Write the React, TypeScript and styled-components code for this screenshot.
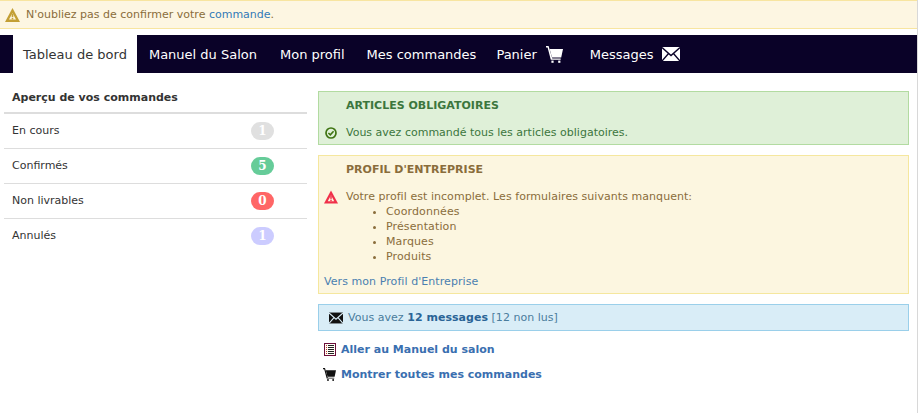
import styled, { createGlobalStyle } from "styled-components";
import { ReactNode } from "react";

const GlobalStyle = createGlobalStyle`
    html, body {
        margin: 0;
        padding: 0;
        background: #fff;
    }
    body {
        font-family: "DejaVu Sans", Tahoma, sans-serif;
        font-size: 11px;
        color: #333;
    }
`;

const CartIcon = ({ size, color }: { size: number; color: string }) => (
    <svg width={size} height={size} viewBox="0 0 17 17" fill={color}>
        <path d="M0 0h2.6l3.7 12.6h8.4v1.2H4.8L1.6 1.6H0z" />
        <path d="M3.6 3h13.4l-1.8 8.4H6z" />
        <rect x="5.4" y="14.6" width="2.2" height="2.2" />
        <rect x="12.2" y="14.6" width="2.2" height="2.2" />
    </svg>
);

const MailIcon = ({ width, height, color, line }: { width: number; height: number; color: string; line: string }) => (
    <svg width={width} height={height} viewBox="0 0 18 14">
        <rect width="18" height="14" fill={color} />
        <path d="M0 0.5l9 8 9-8M0 14l7-8M18 14l-7-8" fill="none" stroke={line} strokeWidth="1.4" />
    </svg>
);

const WarningIcon = ({ color, hole }: { color: string; hole: string }) => (
    <svg width="15" height="14" viewBox="0 0 15 14">
        <path d="M7.5 0L15 14H0z" fill={color} />
        <path d="M7.5 5L11 11.6H4z" fill={hole} />
        <rect x="6.7" y="5.6" width="1.6" height="3.4" fill={color} />
        <rect x="6.7" y="9.8" width="1.6" height="1.6" fill={color} />
    </svg>
);

const CheckIcon = () => (
    <svg width="12" height="12" viewBox="0 0 12 12" fill="none" stroke="#3f7412">
        <circle cx="6" cy="6" r="5" strokeWidth="1.7" />
        <path d="M3.4 6l1.9 1.8 3.3-3.6" strokeWidth="1.6" />
    </svg>
);

const BookIcon = () => (
    <svg width="12" height="13" viewBox="0 0 12 13">
        <rect x="0.5" y="0.5" width="11" height="12" fill="#fffdf5" stroke="#6a0f3a" />
        <path d="M2 2.5h1M2 4.5h1M2 6.5h1M2 8.5h1M2 10.5h1" stroke="#c0392b" strokeWidth="1" />
        <path d="M4 2.5h6M4 4.5h6M4 6.5h6M4 8.5h6M4 10.5h6" stroke="#222" strokeWidth="1" />
    </svg>
);

const Page = styled.div`
    width: 918px;
    height: 413px;
    overflow: hidden;
    box-sizing: border-box;
    border-right: 1px solid #d8d8d8;
`;

const Notice = styled.div`
    display: flex;
    align-items: center;
    gap: 6px;
    height: 29px;
    box-sizing: border-box;
    padding: 0 5px;
    margin-bottom: 6px;
    background: #fdf6e2;
    border-top: 1px solid #f8e5a0;
    border-bottom: 1px solid #f8e5a0;
    color: #8a6d3b;
`;

const Link = styled.a`
    color: #337ab7;
`;

const Nav = styled.nav`
    display: flex;
    height: 38px;
    padding-left: 13px;
    background: #0a0228;
    font-size: 13px;
`;

const Tab = styled.div<{ $active?: boolean; $trail?: number; $gap?: number }>`
    display: flex;
    align-items: center;
    gap: ${(p) => p.$gap ?? 9}px;
    padding: 0 10px;
    margin-right: ${(p) => 2 + (p.$trail ?? 0)}px;
    color: ${(p) => (p.$active ? "#333" : "#fff")};
    background: ${(p) => (p.$active ? "#fff" : "transparent")};
`;

const Content = styled.div`
    display: grid;
    grid-template-columns: 303px 591px;
    column-gap: 11px;
    padding: 18px 0 0 4px;
`;

const Side = styled.aside`
    display: flex;
    flex-direction: column;
`;

const SideTitle = styled.div`
    height: 21px;
    padding: 0 8px;
    font-weight: bold;
    border-bottom: 2px solid #ddd;
    line-height: 13px;
`;

const SideRow = styled.div`
    display: flex;
    align-items: center;
    justify-content: space-between;
    height: 34px;
    padding: 0 33px 0 8px;
    border-bottom: 1px solid #ddd;
    &:last-child {
        border-bottom: 0;
    }
`;

const RowLabel = styled.span`
    padding-bottom: 2px;
`;

const Badge = styled.span<{ $color: string }>`
    display: inline-block;
    width: 23px;
    height: 18px;
    border-radius: 9px;
    background: ${(p) => p.$color};
    color: #fff;
    font-family: "DejaVu Serif", serif;
    font-weight: bold;
    font-size: 12px;
    line-height: 18px;
    text-align: center;
`;

const Main = styled.main`
    display: flex;
    flex-direction: column;
`;

const Panel = styled.section<{ $bg: string; $border: string; $color: string }>`
    background: ${(p) => p.$bg};
    border: 1px solid ${(p) => p.$border};
    color: ${(p) => p.$color};
    padding: 0 5px;
    margin-bottom: 10px;
`;

const PanelTitle = styled.h3`
    margin: 0;
    padding: 7px 0 0 22px;
    font-size: 11px;
    line-height: 13px;
    font-weight: bold;
`;

const StatusRow = styled.div<{ $bottom?: number }>`
    display: flex;
    align-items: center;
    gap: 8px;
    line-height: 15px;
    margin: 13px 0 ${(p) => p.$bottom ?? 0}px;
`;

const IconCell = styled.span`
    display: flex;
    width: 14px;
    flex: none;
    justify-content: center;
`;

const Spaced = styled.span`
    letter-spacing: 0.05px;
`;

const Items = styled.ul`
    margin: 0;
    padding: 0 0 0 62px;
    line-height: 15px;
    letter-spacing: 0.12px;
`;

const Footer = styled.div`
    color: #4a7fb0;
    line-height: 15px;
    margin-top: 10px;
    padding-bottom: 4px;
    letter-spacing: 0.07px;
`;

const MessageBar = styled.div`
    display: flex;
    align-items: center;
    gap: 5px;
    height: 27px;
    box-sizing: border-box;
    padding-left: 10px;
    background: #d9edf7;
    border: 1px solid #9acfea;
    color: #4a7c9c;
    margin-bottom: 6px;
    letter-spacing: 0.03px;
    b {
        color: #2a6496;
    }
`;

const ActionLink = styled.a`
    display: flex;
    align-items: center;
    gap: 5px;
    height: 25px;
    padding-left: 5px;
    font-weight: bold;
    color: #3a6fb0;
`;

const ActionIcon = styled.span`
    display: flex;
    justify-content: center;
    width: 13px;
    flex: none;
`;

const rows: { label: string; count: number; color: string }[] = [
    { label: "En cours", count: 1, color: "#e0e0e0" },
    { label: "Confirmés", count: 5, color: "#66cc99" },
    { label: "Non livrables", count: 0, color: "#ff6666" },
    { label: "Annulés", count: 1, color: "#ccccff" },
];

const forms = ["Coordonnées", "Présentation", "Marques", "Produits"];

const tabs: { label: string; trail?: number; gap?: number; icon?: ReactNode; active?: boolean }[] = [
    { label: "Tableau de bord", active: true },
    { label: "Manuel du Salon", trail: 1 },
    { label: "Mon profil" },
    { label: "Mes commandes", trail: -2 },
    { label: "Panier", trail: 5, icon: <CartIcon size={17} color="#fff" /> },
    { label: "Messages", gap: 8, icon: <MailIcon width={18} height={14} color="#fff" line="#0a0228" /> },
];

export default function App() {
    return (
        <Page>
            <GlobalStyle />
            <Notice>
                <WarningIcon color="#c39f35" hole="#fdf6e2" />
                <span>
                    N'oubliez pas de confirmer votre <Link>commande</Link>.
                </span>
            </Notice>
            <Nav>
                {tabs.map((t) => (
                    <Tab key={t.label} $active={t.active} $trail={t.trail} $gap={t.gap}>
                        {t.label}
                        {t.icon}
                    </Tab>
                ))}
            </Nav>
            <Content>
                <Side>
                    <SideTitle>Aperçu de vos commandes</SideTitle>
                    {rows.map((r) => (
                        <SideRow key={r.label}>
                            <RowLabel>{r.label}</RowLabel>
                            <Badge $color={r.color}>{r.count}</Badge>
                        </SideRow>
                    ))}
                </Side>
                <Main>
                    <Panel $bg="#dff0d8" $border="#b2dba1" $color="#3c763d">
                        <PanelTitle>ARTICLES OBLIGATOIRES</PanelTitle>
                        <StatusRow $bottom={4}>
                            <IconCell>
                                <CheckIcon />
                            </IconCell>
                            Vous avez commandé tous les articles obligatoires.
                        </StatusRow>
                    </Panel>
                    <Panel $bg="#fcf6e0" $border="#f5e79e" $color="#8a6d3b">
                        <PanelTitle>PROFIL D'ENTREPRISE</PanelTitle>
                        <StatusRow>
                            <IconCell>
                                <WarningIcon color="#f0304a" hole="#fcf6e0" />
                            </IconCell>
                            <Spaced>Votre profil est incomplet. Les formulaires suivants manquent:</Spaced>
                        </StatusRow>
                        <Items>
                            {forms.map((f) => (
                                <li key={f}>{f}</li>
                            ))}
                        </Items>
                        <Footer>Vers mon Profil d'Entreprise</Footer>
                    </Panel>
                    <MessageBar>
                        <MailIcon width={14} height={12} color="#111" line="#d9edf7" />
                        <span>
                            Vous avez <b>12 messages</b> [12 non lus]
                        </span>
                    </MessageBar>
                    <ActionLink>
                        <ActionIcon>
                            <BookIcon />
                        </ActionIcon>
                        Aller au Manuel du salon
                    </ActionLink>
                    <ActionLink>
                        <ActionIcon>
                            <CartIcon size={13} color="#111" />
                        </ActionIcon>
                        Montrer toutes mes commandes
                    </ActionLink>
                </Main>
            </Content>
        </Page>
    );
}
